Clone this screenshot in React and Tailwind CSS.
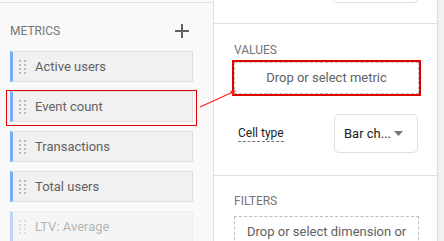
import React from "react";

const METRICS = [
  { name: "Active users" },
  { name: "Event count" },
  { name: "Transactions" },
  { name: "Total users" },
  { name: "LTV: Average", faded: true },
];

function Grip() {
  return (
    <div className="grid grid-cols-2 gap-x-[3px] gap-y-[2px] w-[7px]">
      {Array.from({ length: 8 }).map((_, i) => (
        <span key={i} className="block w-[2px] h-[2px] bg-[#bdbdbd]" />
      ))}
    </div>
  );
}

function Chip({ name, faded }) {
  return (
    <div className={`flex items-center h-[31px] w-[183px] bg-[#f1f1f1] border border-[#e0e0e0] border-l-[3px] border-l-[#7baaf7] pl-[6px] ${faded ? "opacity-45" : ""}`}>
      <Grip />
      <span className="ml-[9px] mt-[1px] text-[13px] text-[#616161]">{name}</span>
    </div>
  );
}

function Label({ children }) {
  return <div className="text-[12px] leading-[14px] text-[#757575] uppercase">{children}</div>;
}

export default function App() {
  return (
    <div className="relative flex w-[444px] h-[241px] overflow-hidden bg-white" style={{ fontFamily: "Roboto, 'Liberation Sans', sans-serif" }}>
      {/* left: metric list */}
      <div className="w-[214px] shrink-0 bg-[#f9f9f9] border-r border-[#e0e0e0] pt-[2px]">
        <div className="border-t border-[#e0e0e0]">
          <div className="flex items-center justify-between pl-[10px] pr-[24px] pt-[21px]">
            <Label>Metrics</Label>
            <svg width="14" height="14" viewBox="0 0 14 14">
              <path d="M7 0v14M0 7h14" stroke="#616161" strokeWidth="2" />
            </svg>
          </div>
          <div className="flex flex-col gap-[9px] pl-[10px] mt-[13px]">
            {METRICS.map((m) => <Chip key={m.name} {...m} />)}
          </div>
        </div>
      </div>

      {/* right: drop zones */}
      <div className="w-[223px] shrink-0 bg-white flex flex-col">
        <div className="h-[24px] shrink-0 border-b border-[#e0e0e0]">
          <div className="ml-[119px] w-[84px] h-[3px] border border-t-0 border-[#e0e0e0] rounded-b-[4px]" />
        </div>
        <div className="h-[152px] shrink-0 border-b border-[#e0e0e0] pl-[20px] pr-[18px] pt-[19px]">
          <Label>Values</Label>
          <div className="mt-[5px] h-[32px] flex items-center justify-center border border-dashed border-[#bdbdbd] outline-2 outline-[#e00000] text-[13px] text-[#616161]">
            Drop or select metric
          </div>
          <div className="mt-[20px] flex items-center justify-between pl-[4px] pr-[1px]">
            <span className="text-[12px] text-[#202124] border-b border-dashed border-[#757575] leading-[15px]">Cell type</span>
            <div className="w-[84px] h-[39px] border border-[#e0e0e0] rounded-[5px] flex items-center pl-[9px] pr-[14px] justify-between">
              <span className="text-[13px] text-[#202124]">Bar ch...</span>
              <svg width="9" height="5" viewBox="0 0 9 5"><path d="M0 0h9L4.5 5z" fill="#757575" /></svg>
            </div>
          </div>
        </div>
        <div className="shrink-0 pl-[20px] pr-[18px] pt-[18px]">
          <Label>Filters</Label>
          <div className="mt-[8px] h-[40px] border border-dashed border-[#bdbdbd] px-[12px] pt-[5px] text-[13px] text-[#616161] whitespace-nowrap overflow-hidden">
            Drop or select dimension or
          </div>
        </div>
      </div>

      {/* scrollbar */}
      <div className="flex-1 bg-[#f1f1f1] border-l border-[#e0e0e0]" />

      {/* annotation */}
      <div className="absolute left-[6px] top-[90px] w-[191px] h-[36px] border-[1.5px] border-[#e00000]" />
      <svg className="absolute left-0 top-0" width="444" height="241">
        <line x1="200" y1="107" x2="233" y2="92" stroke="#ff2020" strokeWidth="1.2" />
        <path d="M236 90.5l-6 0.2 2.4 4.6z" fill="#ff2020" />
      </svg>
    </div>
  );
}
